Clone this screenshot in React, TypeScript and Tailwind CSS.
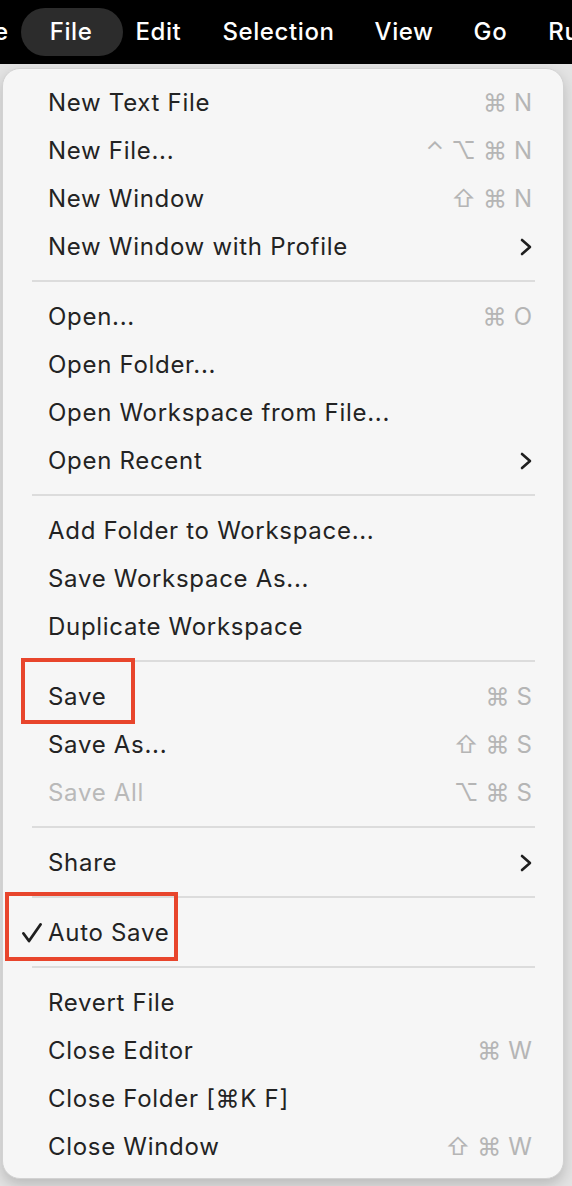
import React from 'react';

type Item = {
    label: string;
    keys?: string[];
    submenu?: boolean;
    disabled?: boolean;
    checked?: boolean;
    highlight?: 'save' | 'auto';
};

const groups: Item[][] = [
    [
        { label: 'New Text File', keys: ['⌘', 'N'] },
        { label: 'New File...', keys: ['⌃', '⌥', '⌘', 'N'] },
        { label: 'New Window', keys: ['⇧', '⌘', 'N'] },
        { label: 'New Window with Profile', submenu: true },
    ],
    [
        { label: 'Open...', keys: ['⌘', 'O'] },
        { label: 'Open Folder...' },
        { label: 'Open Workspace from File...' },
        { label: 'Open Recent', submenu: true },
    ],
    [
        { label: 'Add Folder to Workspace...' },
        { label: 'Save Workspace As...' },
        { label: 'Duplicate Workspace' },
    ],
    [
        { label: 'Save', keys: ['⌘', 'S'], highlight: 'save' },
        { label: 'Save As...', keys: ['⇧', '⌘', 'S'] },
        { label: 'Save All', keys: ['⌥', '⌘', 'S'], disabled: true },
    ],
    [{ label: 'Share', submenu: true }],
    [{ label: 'Auto Save', checked: true, highlight: 'auto' }],
    [
        { label: 'Revert File' },
        { label: 'Close Editor', keys: ['⌘', 'W'] },
        { label: 'Close Folder [⌘K F]' },
        { label: 'Close Window', keys: ['⇧', '⌘', 'W'] },
    ],
];

const Chevron = () => (
    <svg width="12" height="18" viewBox="0 0 12 18" fill="none">
        <path d="M2 2 L10 9 L2 16" stroke="#1f1f1f" strokeWidth="2.6" strokeLinecap="round" strokeLinejoin="round" />
    </svg>
);

const Check = () => (
    <svg width="20" height="20" viewBox="0 0 20 20" fill="none">
        <path d="M1.5 10.5 L7 18 L18.5 1.5" stroke="#1f1f1f" strokeWidth="2.8" strokeLinecap="round" strokeLinejoin="round" />
    </svg>
);

const MenuRow: React.FC<{ item: Item }> = ({ item }) => (
    <div className="relative h-[48px] flex items-center justify-between pl-[45px] pr-[31px]">
        {item.checked && (
            <span className="absolute left-[19px] top-[14px]">
                <Check />
            </span>
        )}
        <span className={`text-[24px] leading-none tracking-[0.7px] ${item.disabled ? 'text-[#b9b9b9]' : 'text-[#232323]'}`}>
            {item.label}
        </span>
        {item.keys && (
            <span className="flex items-center gap-[7px] text-[24px] leading-none text-[#b5b5b5]">
                {item.keys.map((k, i) => (
                    <span key={i}>{k}</span>
                ))}
            </span>
        )}
        {item.submenu && <Chevron />}
        {item.highlight === 'save' && (
            <div className="absolute left-[18px] top-[-15px] w-[114px] h-[66px] border-[4px] border-[#e8452c]" />
        )}
        {item.highlight === 'auto' && (
            <div className="absolute left-[2px] top-[-17px] w-[173px] h-[69px] border-[4px] border-[#e8452c]" />
        )}
    </div>
);

const App: React.FC = () => {
    return (
        <div className="w-[572px] h-[1186px] overflow-hidden bg-[#e3e3e3] font-['Inter','DejaVu_Sans',sans-serif]">
            <header className="h-[64px] bg-black flex items-center text-white text-[24px] font-medium tracking-[0.6px] whitespace-nowrap">
                <span className="ml-[-6px] mr-[12px]">e</span>
                <span className="h-[48px] flex items-center pl-[29px] pr-[31px] rounded-full bg-[#2c2c2c]">File</span>
                <span className="ml-[12px]">Edit</span>
                <span className="ml-[41px]">Selection</span>
                <span className="ml-[40px]">View</span>
                <span className="ml-[40px]">Go</span>
                <span className="ml-[41px]">Run</span>
            </header>

            <div className="pt-[4px] pl-[2px]">
                <div className="w-[562px] h-[1111px] rounded-[18px] bg-[#f6f6f6] border border-[#d2d2d2] shadow-[0_6px_14px_rgba(0,0,0,0.18)] pt-[10px] pb-[8px]">
                    {groups.map((group, gi) => (
                        <div key={gi}>
                            {gi > 0 && (
                                <div className="h-[22px] pt-[9px] pl-[29px] pr-[28px]">
                                    <div className="h-[2px] bg-[#dcdcdc]" />
                                </div>
                            )}
                            {group.map((item) => (
                                <MenuRow key={item.label} item={item} />
                            ))}
                        </div>
                    ))}
                </div>
            </div>
        </div>
    );
};

export default App;
